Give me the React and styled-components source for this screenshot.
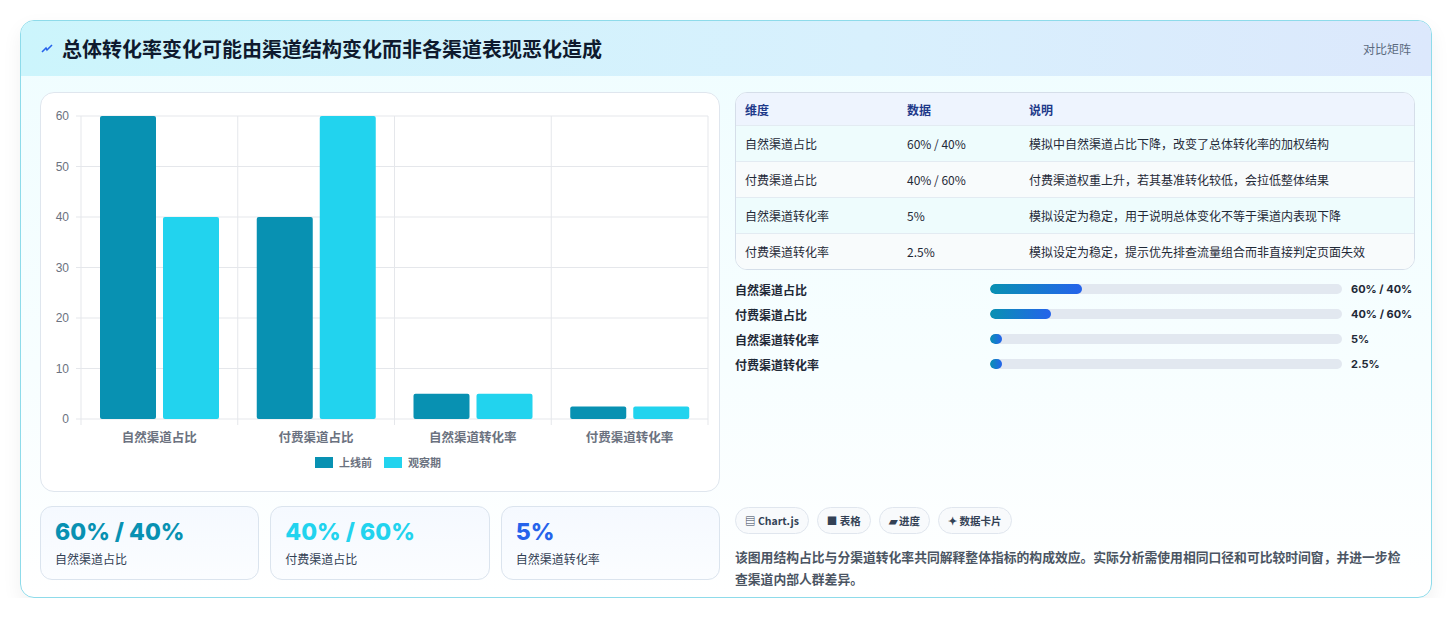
import React from "react";
import styled, { createGlobalStyle } from "styled-components";

const Global = createGlobalStyle`
  html,body{margin:0;padding:0;background:#fff;}
  body{font-family:"Noto Sans CJK SC","Noto Sans",sans-serif;}
  #root{padding:20px 20px 0 20px;}
`;
const Card = styled.div`
  width:1412px;height:578px;box-sizing:border-box;border:1px solid #8edbea;border-radius:14px;
  background:linear-gradient(180deg,#effdff 0%,#f7feff 60%,#ffffff 100%);overflow:hidden;
  box-shadow:0 8px 20px rgba(0,0,0,0.06);
`;
const Header = styled.div`
  height:55px;display:flex;align-items:center;justify-content:space-between;padding:0 20px;
  background:linear-gradient(90deg,#ccf5fc 0%,#d8f0fd 60%,#dce8fc 100%);
`;
const Title = styled.h1`margin:0;font-size:20px;font-weight:700;color:#0f1a2e;display:flex;align-items:center;gap:9px;`;
const Tag = styled.span`font-size:12px;color:#5b6b7f;`;
const Body = styled.div`display:grid;grid-template-columns:680px 680px;gap:15px;padding:16px 19px 0 19px;`;
const Col = styled.div`display:flex;flex-direction:column;`;
const ChartBox = styled.div`height:400px;box-sizing:border-box;border:1px solid #dfe6ee;border-radius:14px;background:#fff;`;
const Kpis = styled.div`display:grid;grid-template-columns:repeat(3,1fr);gap:11px;margin-top:14px;`;
const Kpi = styled.div`height:74px;box-sizing:border-box;border:1px solid #dbe4ee;border-radius:12px;background:linear-gradient(180deg,#f5f9ff,#fbfdff);padding:10px 14px;`;
const KVal = styled.div`font-family:"Inter","Noto Sans",sans-serif;font-size:23px;font-weight:800;color:${p=>p.c};line-height:30px;`;
const KLab = styled.div`font-size:12px;color:#334155;margin-top:3px;`;
const Table = styled.div`border:1px solid #d5dee9;border-radius:12px;overflow:hidden;background:#fff;`;
const Row = styled.div`display:grid;grid-template-columns:162px 122px 1fr;height:${p=>p.h}px;align-items:center;padding:0 9px;
  background:${p=>p.head?"#eef4fe":p.alt?"#f8fbfc":"#eefcfd"};border-top:${p=>p.first?"none":"1px solid #e3ebf2"};
  font-size:12px;color:${p=>p.head?"#1e3a8a":"#1f2937"};font-weight:${p=>p.head?600:400};`;
const Bars = styled.div`display:flex;flex-direction:column;gap:7px;margin-top:10px;`;
const BarRow = styled.div`display:grid;grid-template-columns:246px 352px 1fr;column-gap:9px;align-items:center;height:18px;font-size:12px;font-weight:600;color:#1f2937;`;
const Track = styled.div`height:10px;border-radius:5px;background:#e2e8f0;overflow:hidden;`;
const Fill = styled.div`height:100%;border-radius:5px;background:linear-gradient(90deg,#0891b2,#2563eb);`;
const Val = styled.span`font-family:"Inter","Noto Sans",sans-serif;font-size:11px;font-weight:700;white-space:nowrap;`;
const Chips = styled.div`display:flex;gap:8px;margin-top:134px;`;
const Chip = styled.span`height:27px;box-sizing:border-box;padding:0 9px;border:1px solid #e0e6ee;border-radius:14px;background:#f8fafc;display:flex;align-items:center;gap:4px;font-size:10.5px;font-weight:600;color:#334155;`;
const Para = styled.p`margin:12px 0 0;padding-right:4px;font-size:12.8px;line-height:22px;color:#4b5563;font-weight:600;`;

const data=[["自然渠道占比",60,40],["付费渠道占比",40,60],["自然渠道转化率",5,5],["付费渠道转化率",2.5,2.5]];

function Chart(){
  const x0=40,y0=326,top=23,w=627,cw=w/4,k=(y0-top)/60;
  return (
    <svg width="678" height="398">
      {[0,10,20,30,40,50,60].map(v=>{const y=y0-v*k;return <g key={v}>
        <line x1={x0-5} x2={x0+w} y1={y} y2={y} stroke="#e5e7eb"/>
        <text x={x0-12} y={y+4} fontSize="12" fill="#6b7280" textAnchor="end" fontFamily="Liberation Sans">{v}</text></g>})}
      {[0,1,2,3,4].map(i=><line key={i} x1={x0+i*cw} x2={x0+i*cw} y1={top} y2={y0+6} stroke="#e5e7eb"/>)}
      {data.map((d,i)=>{const cx=x0+i*cw;return <g key={i}>
        <rect x={cx+19} y={y0-d[1]*k} width="56" height={d[1]*k} rx="2" fill="#0891b2"/>
        <rect x={cx+82} y={y0-d[2]*k} width="56" height={d[2]*k} rx="2" fill="#22d3ee"/>
        <text x={cx+cw/2} y={y0+23} fontSize="12.5" fill="#6b7280" fontWeight="600" textAnchor="middle" fontFamily="Noto Sans CJK SC">{d[0]}</text></g>})}
      <rect x="274" y="364" width="18" height="11" fill="#0891b2"/>
      <text x="298" y="374" fontSize="11" fill="#6b7280" fontWeight="600" fontFamily="Noto Sans CJK SC">上线前</text>
      <rect x="343" y="364" width="18" height="11" fill="#22d3ee"/>
      <text x="367" y="374" fontSize="11" fill="#6b7280" fontWeight="600" fontFamily="Noto Sans CJK SC">观察期</text>
    </svg>);
}

const rows=[["自然渠道占比","60% / 40%","模拟中自然渠道占比下降，改变了总体转化率的加权结构"],["付费渠道占比","40% / 60%","付费渠道权重上升，若其基准转化较低，会拉低整体结果"],["自然渠道转化率","5%","模拟设定为稳定，用于说明总体变化不等于渠道内表现下降"],["付费渠道转化率","2.5%","模拟设定为稳定，提示优先排查流量组合而非直接判定页面失效"]];
const bars=[["自然渠道占比",26,"60% / 40%"],["付费渠道占比",17.2,"40% / 60%"],["自然渠道转化率",3.4,"5%"],["付费渠道转化率",3.4,"2.5%"]];

export default function App(){
  return <>
    <Global/>
    <Card>
      <Header>
        <Title><svg width="12" height="10" viewBox="0 0 12 10"><path d="M1 8 L5 4 L6 6 L11 1" stroke="#2563eb" strokeWidth="1.6" fill="none"/></svg>总体转化率变化可能由渠道结构变化而非各渠道表现恶化造成</Title>
        <Tag>对比矩阵</Tag>
      </Header>
      <Body>
        <Col>
          <ChartBox><Chart/></ChartBox>
          <Kpis>
            <Kpi><KVal c="#0891b2">60% / 40%</KVal><KLab>自然渠道占比</KLab></Kpi>
            <Kpi><KVal c="#22d3ee">40% / 60%</KVal><KLab>付费渠道占比</KLab></Kpi>
            <Kpi><KVal c="#2563eb">5%</KVal><KLab>自然渠道转化率</KLab></Kpi>
          </Kpis>
        </Col>
        <Col>
          <Table>
            <Row head first h={32}><span>维度</span><span>数据</span><span>说明</span></Row>
            {rows.map((r,i)=><Row key={i} alt={i%2===1} h={35}><span>{r[0]}</span><span>{r[1]}</span><span>{r[2]}</span></Row>)}
          </Table>
          <Bars>
            {bars.map((b,i)=><BarRow key={i}><span>{b[0]}</span><Track><Fill style={{width:b[1]+"%"}}/></Track><Val>{b[2]}</Val></BarRow>)}
          </Bars>
          <Chips>
            <Chip>▤ Chart.js</Chip><Chip>■ 表格</Chip><Chip>▰ 进度</Chip><Chip>✦ 数据卡片</Chip>
          </Chips>
          <Para>该图用结构占比与分渠道转化率共同解释整体指标的构成效应。实际分析需使用相同口径和可比较时间窗，并进一步检查渠道内部人群差异。</Para>
        </Col>
      </Body>
    </Card>
  </>;
}
